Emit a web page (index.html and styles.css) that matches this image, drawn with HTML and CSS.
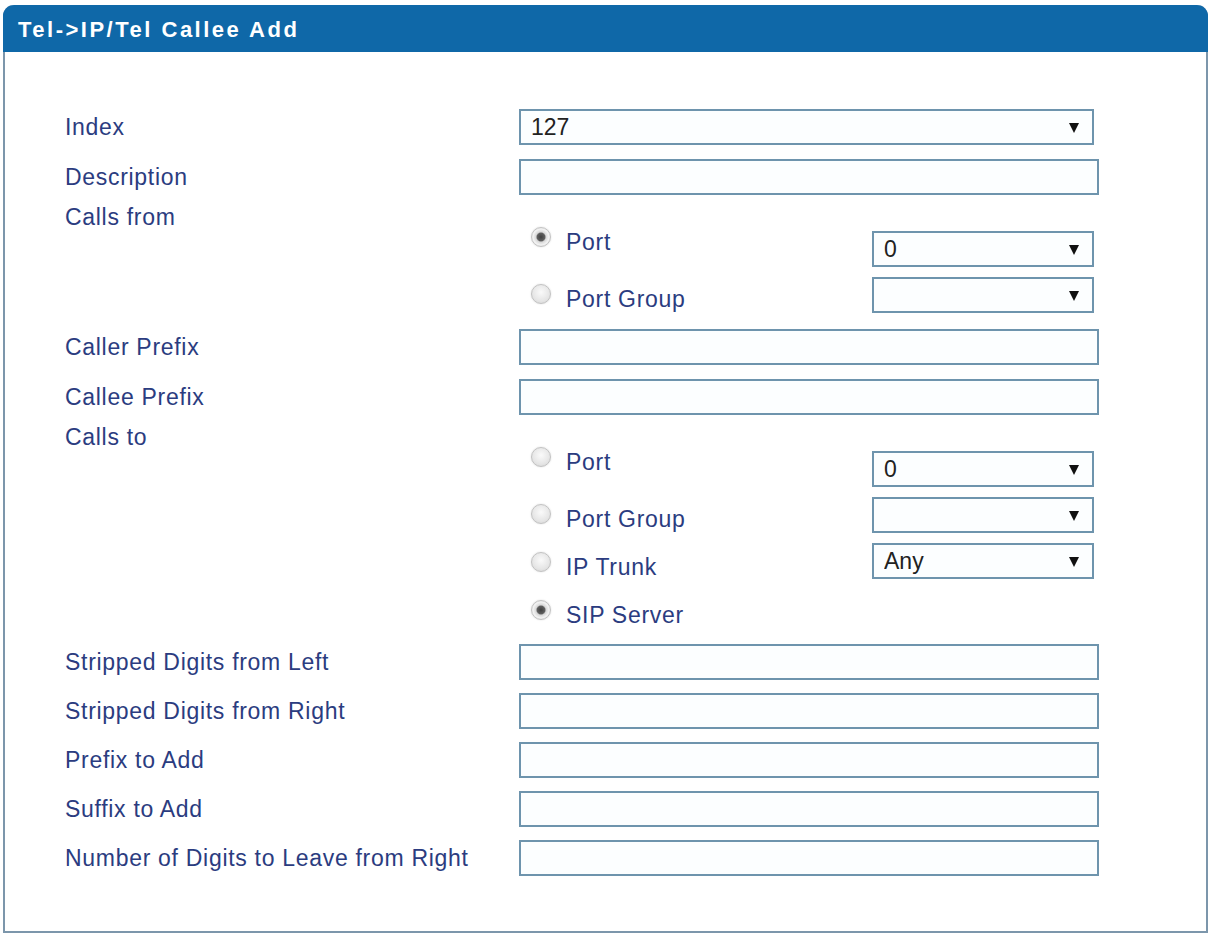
FILE: index.html
```html
<!DOCTYPE html>
<html lang="en">
<head>
    <meta charset="UTF-8">
    <meta name="viewport" content="width=device-width, initial-scale=1.0">
    <title>Tel-&gt;IP/Tel Callee Add</title>
    <link rel="stylesheet" href="styles.css">
</head>
<body>
    <div class="panel">
        <div class="panel-header">Tel-&gt;IP/Tel Callee Add</div>

        <div class="panel-body">
            <div class="row">
                <label class="field-label">Index</label>
                <div class="select-box wide">
                    <select><option>127</option></select>
                </div>
            </div>
            <div class="row">
                <label class="field-label">Description</label>
                <input type="text" class="text-input">
            </div>

            <!-- Calls from -->
            <div class="option-row calls-from">
                <label class="field-label top">Calls from</label>
                <div class="options">
                    <div class="radio-list">
                        <label class="radio-item first"><input type="radio" name="from" checked> Port</label>
                        <label class="radio-item"><input type="radio" name="from"> Port Group</label>
                    </div>
                    <div class="select-list">
                        <div class="select-box small"><select><option>0</option></select></div>
                        <div class="select-box small"><select><option></option></select></div>
                    </div>
                </div>
            </div>

            <div class="row">
                <label class="field-label">Caller Prefix</label>
                <input type="text" class="text-input">
            </div>
            <div class="row">
                <label class="field-label">Callee Prefix</label>
                <input type="text" class="text-input">
            </div>

            <!-- Calls to -->
            <div class="option-row">
                <label class="field-label top">Calls to</label>
                <div class="options">
                    <div class="radio-list">
                        <label class="radio-item first"><input type="radio" name="to"> Port</label>
                        <label class="radio-item"><input type="radio" name="to"> Port Group</label>
                        <label class="radio-item"><input type="radio" name="to"> IP Trunk</label>
                        <label class="radio-item"><input type="radio" name="to" checked> SIP Server</label>
                    </div>
                    <div class="select-list">
                        <div class="select-box small"><select><option>0</option></select></div>
                        <div class="select-box small"><select><option></option></select></div>
                        <div class="select-box small"><select><option>Any</option></select></div>
                    </div>
                </div>
            </div>

            <div class="row compact">
                <label class="field-label">Stripped Digits from Left</label>
                <input type="text" class="text-input">
            </div>
            <div class="row compact">
                <label class="field-label">Stripped Digits from Right</label>
                <input type="text" class="text-input">
            </div>
            <div class="row compact">
                <label class="field-label">Prefix to Add</label>
                <input type="text" class="text-input">
            </div>
            <div class="row compact">
                <label class="field-label">Suffix to Add</label>
                <input type="text" class="text-input">
            </div>
            <div class="row compact">
                <label class="field-label">Number of Digits to Leave from Right</label>
                <input type="text" class="text-input">
            </div>
        </div>
    </div>
</body>
</html>
```

FILE: styles.css
```css
body {
    margin: 0;
    background: #ffffff;
    font-family: "Liberation Sans", Arial, sans-serif;
}

.panel {
    margin: 5px 2px 0 3px;
    width: 1201px;
    height: 926px;
    border: 2px solid #7c96ab;
    border-top: none;
    border-radius: 11px 11px 0 0;
}

.panel-header {
    height: 47px;
    margin: 0 -2px;
    padding-left: 15px;
    background: #0f68a8;
    border-radius: 11px 11px 0 0;
    color: #ffffff;
    font-size: 22px;
    font-weight: bold;
    letter-spacing: 2.5px;
    line-height: 49px;
}

.panel-body {
    padding: 50px 0 0 60px;
}

.row {
    display: grid;
    grid-template-columns: 454px 1fr;
    align-items: center;
    height: 50px;
}

.row.compact {
    height: 49px;
}

.field-label {
    color: #2b3c80;
    font-size: 23px;
    letter-spacing: 0.7px;
    line-height: 30px;
}

.field-label.top {
    align-self: start;
}

.text-input {
    box-sizing: border-box;
    width: 580px;
    height: 36px;
    border: 2px solid #6e94ad;
    background: #fcfeff;
    font-family: inherit;
    font-size: 22px;
}

.select-box {
    position: relative;
    box-sizing: border-box;
    height: 36px;
    border: 2px solid #6e94ad;
    background: #fcfeff;
}

.select-box.wide {
    width: 575px;
}

.select-box.small {
    width: 222px;
}

.select-box select {
    appearance: none;
    -webkit-appearance: none;
    width: 100%;
    height: 100%;
    border: none;
    background: transparent;
    padding: 0 0 0 10px;
    color: #222222;
    font-family: inherit;
    font-size: 23px;
    outline: none;
}

/* dropdown arrow */
.select-box::after {
    content: "";
    position: absolute;
    right: 13px;
    top: 12px;
    border-left: 5px solid transparent;
    border-right: 5px solid transparent;
    border-top: 10px solid #111111;
}

.option-row {
    display: grid;
    grid-template-columns: 454px 1fr;
}

.option-row.calls-from {
    height: 120px;
}

.options {
    display: flex;
    align-items: flex-start;
}

.radio-list {
    width: 341px;
    padding: 25px 0 7px 12px;
    display: flex;
    flex-direction: column;
    gap: 18px;
}

.radio-item {
    display: flex;
    align-items: flex-start;
    height: 30px;
    line-height: 30px;
    color: #2b3c80;
    font-size: 23px;
    letter-spacing: 0.7px;
}

.radio-item.first {
    margin-bottom: 9px;
}

.radio-item input {
    appearance: none;
    -webkit-appearance: none;
    box-sizing: border-box;
    width: 20px;
    height: 20px;
    margin: 0 15px 0 0;
    border: 1px solid #c2c2c2;
    border-radius: 50%;
    background: radial-gradient(circle at 50% 40%, #fafafa 0%, #e6e6e6 60%, #d2d2d2 100%);
    box-shadow: 0 0 2px rgba(0, 0, 0, 0.15);
}

.radio-item input:checked {
    background: radial-gradient(circle, #3f3f3f 0%, #5e5e5e 30%, #d8d8d8 40%, #f2f2f2 62%, #d0d0d0 100%);
}

.select-list {
    padding: 29px 0 10px;
    display: flex;
    flex-direction: column;
    gap: 10px;
}
```
